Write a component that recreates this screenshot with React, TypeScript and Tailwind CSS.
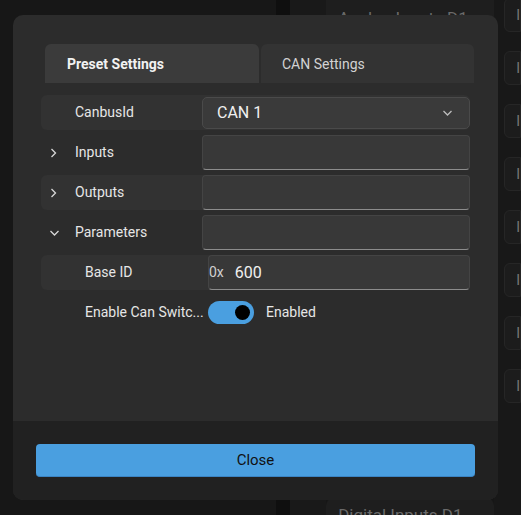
import React from 'react';

const ChevronRight = () => (
  <svg width="10" height="12" viewBox="0 0 10 12" fill="none" stroke="#d8d8d8" strokeWidth="1.3">
    <path d="M2.5 2 L6.5 6 L2.5 10" />
  </svg>
);

const ChevronDown = ({ color = '#d8d8d8' }: { color?: string }) => (
  <svg width="11" height="10" viewBox="0 0 11 10" fill="none" stroke={color} strokeWidth="1.3">
    <path d="M1.5 3 L5.5 7 L9.5 3" />
  </svg>
);

const Field = ({ children }: { children?: React.ReactNode }) => (
  <div className="h-full flex-1 rounded-[4px] border border-[#444] border-b-[#8c8c8c] bg-[#383838] flex items-center">
    {children}
  </div>
);

interface RowProps {
  label: string;
  chevron?: 'right' | 'down';
  striped?: boolean;
  indent?: boolean;
  children?: React.ReactNode;
}

const Row = ({ label, chevron, striped, indent, children }: RowProps) => (
  <div className={`h-[35px] flex items-center rounded-[6px] ${striped ? 'bg-[#323232]' : ''}`}>
    <div className="w-[161px] h-full flex items-center shrink-0">
      <div className="w-[34px] flex justify-start pl-[8px] shrink-0">
        {chevron === 'right' && <ChevronRight />}
        {chevron === 'down' && <ChevronDown />}
      </div>
      <span className={`text-[14px] text-[#e6e6e6] whitespace-nowrap ${indent ? 'pl-[10px]' : ''}`}>{label}</span>
    </div>
    {children}
  </div>
);

export default function App() {
  return (
    <div className="relative w-[521px] h-[515px] overflow-hidden bg-[#161616]" style={{ fontFamily: 'Roboto, "Liberation Sans", sans-serif' }}>
      {/* dimmed app behind */}
      <div className="flex h-full">
        <div className="w-[278px] bg-[#171717]" />
        <div className="w-[14px] bg-[#0f0f0f]" />
        <div className="w-[36px] bg-[#191919]" />
        <div className="w-[169px] flex flex-col">
          <div className="h-[425px] shrink-0 bg-[#1e1e1e] rounded-b-[8px] pl-[12px] pt-[6px]">
            <span className="text-[17px] text-[#6a6a6a]">Analog Inputs D1</span>
          </div>
          <div className="h-[73px] shrink-0 bg-[#141414]" />
          <div className="flex-1 bg-[#1e1e1e] rounded-t-[8px] pl-[12px] pt-[9px] leading-none overflow-hidden">
            <span className="text-[17px] leading-none text-[#6a6a6a]">Digital Inputs D1</span>
          </div>
        </div>
        <div className="w-[10px] bg-[#181818]" />
        <div className="flex-1 bg-[#181818] flex flex-col gap-[19px] -mt-[2px]">
          {[0, 1, 2, 3, 4, 5, 6, 7].map((i) => (
            <div key={i} className="h-[34px] shrink-0 rounded-l-[6px] border border-[#262626] bg-[#1c1c1c] flex items-center pl-[11px] text-[14px] text-[#777]">
              I
            </div>
          ))}
        </div>
      </div>

      {/* modal */}
      <div className="absolute left-[13px] top-[15px] w-[485px] h-[485px] rounded-[10px] bg-[#2c2c2c] flex flex-col overflow-hidden">
        <div className="flex-1 pt-[29px]">
          <div className="flex ml-[32px] mr-[24px] h-[39px] gap-[2px]">
            <div className="flex-1 rounded-t-[6px] bg-[#3b3b3b] flex items-center pl-[22px] pt-[2px] text-[14px] font-bold text-[#f2f2f2]">
              Preset Settings
            </div>
            <div className="flex-1 rounded-t-[6px] bg-[#333333] flex items-center pl-[21px] pt-[2px] text-[14px] text-[#d2d2d2]">
              CAN Settings
            </div>
          </div>

          <div className="mx-[28px] mt-[12px] flex flex-col gap-[5px]">
            <Row label="CanbusId" striped>
              <div className="h-[32px] flex-1 rounded-[5px] border border-[#4a4a4a] bg-[#3a3a3a] flex items-center justify-between pl-[14px] pr-[16px]">
                <span className="text-[16px] text-[#f0f0f0]">CAN 1</span>
                <ChevronDown color="#bdbdbd" />
              </div>
            </Row>
            <Row label="Inputs" chevron="right">
              <Field />
            </Row>
            <Row label="Outputs" chevron="right" striped>
              <Field />
            </Row>
            <Row label="Parameters" chevron="down">
              <Field />
            </Row>
            <Row label="Base ID" striped indent>
              <div className="h-full flex-1 flex pl-[6px]">
                <Field>
                  <span className="text-[14px] text-[#d0d0d0]">0x</span>
                  <span className="ml-[11px] text-[16px] text-[#f0f0f0]">600</span>
                </Field>
              </div>
            </Row>
            <Row label="Enable Can Switc..." indent>
              <div className="flex items-center pl-[6px] gap-[12px]">
                <div className="w-[46px] h-[23px] rounded-full bg-[#4a9fe0] flex items-center justify-end pr-[4px]">
                  <div className="w-[15px] h-[15px] rounded-full bg-black" />
                </div>
                <span className="text-[14px] text-[#e6e6e6]">Enabled</span>
              </div>
            </Row>
          </div>
        </div>

        <div className="h-[79px] bg-[#212121] px-[23px] pt-[23px]">
          <button className="w-full h-[33px] rounded-[4px] bg-[#4a9fe0] border-b border-[#3a84c4] text-[15px] text-[#111]">
            Close
          </button>
        </div>
      </div>
    </div>
  );
}
